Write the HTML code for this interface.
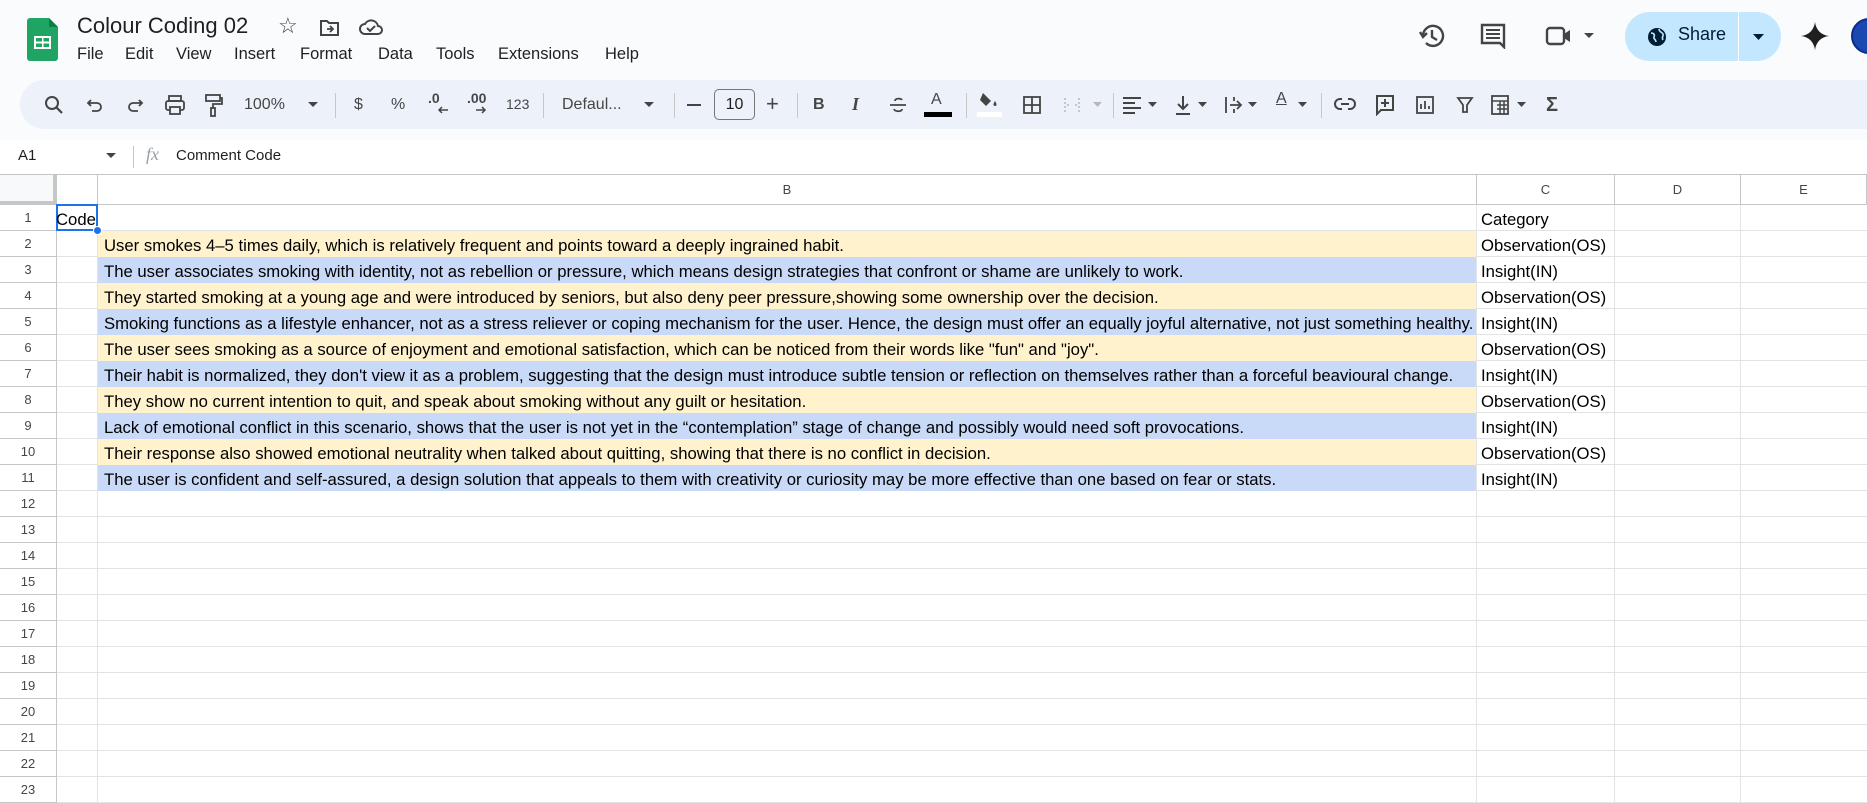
<!DOCTYPE html>
<html><head><meta charset="utf-8">
<style>
*{margin:0;padding:0;box-sizing:border-box}
body{width:1867px;height:802px;overflow:hidden;background:#fff;font-family:"Liberation Sans",Arial,sans-serif;position:relative;color:#1f1f1f}
.a{position:absolute;white-space:nowrap}
#top{position:absolute;left:0;top:0;width:1867px;height:140px;background:#f9fbfd}
#tb{position:absolute;left:20px;top:80px;width:1880px;height:49px;background:#edf2fa;border-radius:25px}
.menu{font-size:16.5px;top:45px;color:#1f1f1f}
.ti{top:96px;font-size:16px;color:#444746}
.sep{position:absolute;top:93px;width:1px;height:25px;background:#c7c7c7}
svg{position:absolute}
.ch{position:absolute;top:175px;height:30px;border-right:1px solid #c4c7c5;border-bottom:1px solid #c4c7c5;font-size:13px;color:#444746;text-align:center;line-height:30px}
.rh{position:absolute;left:0;width:57px;height:26px;border-right:1px solid #c4c7c5;border-bottom:1px solid #c4c7c5;font-size:13px;color:#444746;text-align:center;line-height:26px}
.row{position:absolute;left:57px;width:1810px;height:26px;border-bottom:1px solid #e2e3e3}
.cl{position:absolute;top:0;height:26px;border-right:1px solid #e2e3e3}
.t{position:absolute;top:2px;font-size:16.7px;line-height:26px;color:#000;white-space:nowrap}
.Y{background:#fff2cc}.B{background:#c9daf8}
</style></head><body>
<div id="top"></div>
<svg style="left:27px;top:18px" width="31" height="43" viewBox="0 0 31 43"><path d="M3 0h19l9 9v31a3 3 0 0 1-3 3H3a3 3 0 0 1-3-3V3a3 3 0 0 1 3-3z" fill="#1fa463"/><path d="M22 0l9 9h-9z" fill="#0b8043"/><rect x="7" y="18" width="17" height="13" fill="#fff"/><rect x="9" y="20" width="6" height="3.5" fill="#1fa463"/><rect x="16.5" y="20" width="5.5" height="3.5" fill="#1fa463"/><rect x="9" y="25.5" width="6" height="3.5" fill="#1fa463"/><rect x="16.5" y="25.5" width="5.5" height="3.5" fill="#1fa463"/></svg>
<div class="a" style="left:77px;top:13px;font-size:22px;color:#1f1f1f">Colour Coding 02</div>
<div class="a" style="left:278px;top:13px;font-size:22px;color:#444">☆</div>
<svg style="left:319px;top:18px" width="22" height="20" viewBox="0 0 22 20"><path d="M2 3h6l2 2h9v12H2z" fill="none" stroke="#444" stroke-width="2"/><path d="M8 11h6M11 8l3 3-3 3" fill="none" stroke="#444" stroke-width="1.8"/></svg>
<svg style="left:358px;top:17px" width="26" height="20" viewBox="0 0 26 20"><path d="M7 17h13a4 4 0 0 0 0-8 7 7 0 0 0-13-2 5 5 0 0 0 0 10z" fill="none" stroke="#444" stroke-width="2"/><path d="M9 11l3 3 5-5" fill="none" stroke="#444" stroke-width="2"/></svg>
<div class="a menu" style="left:77px">File</div>
<div class="a menu" style="left:125px">Edit</div>
<div class="a menu" style="left:176px">View</div>
<div class="a menu" style="left:234px">Insert</div>
<div class="a menu" style="left:300px">Format</div>
<div class="a menu" style="left:378px">Data</div>
<div class="a menu" style="left:436px">Tools</div>
<div class="a menu" style="left:498px">Extensions</div>
<div class="a menu" style="left:605px">Help</div>
<svg style="left:1418px;top:22px" width="28" height="28" viewBox="0 0 28 28"><path d="M5 14a10 10 0 1 1 3 7" fill="none" stroke="#444" stroke-width="2.4"/><path d="M2 10l3 5 4-4" fill="none" stroke="#444" stroke-width="2.4"/><path d="M14 8v7l5 3" fill="none" stroke="#444" stroke-width="2.4"/></svg>
<svg style="left:1480px;top:23px" width="26" height="26" viewBox="0 0 26 26"><path d="M2 2h22v22l-4-4H2z" fill="none" stroke="#444" stroke-width="2.4"/><path d="M6 7h14M6 11h14M6 15h14" stroke="#444" stroke-width="2"/></svg>
<svg style="left:1545px;top:25px" width="28" height="22" viewBox="0 0 28 22"><rect x="2" y="3" width="17" height="16" rx="3" fill="none" stroke="#444" stroke-width="2.4"/><path d="M19 9l6-4v12l-6-4" fill="#444"/></svg>
<svg style="left:1584px;top:33px" width="10" height="6"><path d="M0 0h10L5 5z" fill="#444"/></svg>
<div style="position:absolute;left:1625px;top:12px;width:156px;height:49px;border-radius:25px;background:#c2e7ff"></div>
<div style="position:absolute;left:1738px;top:12px;width:1px;height:49px;background:#fff"></div>
<svg style="left:1647px;top:27px" width="20" height="20" viewBox="0 0 20 20"><circle cx="10" cy="10" r="9" fill="#001d35"/><path d="M4 6c3 0 4 2 3 4s2 2 2 5M12 2c0 3 3 3 4 5s-2 3 0 6" stroke="#c2e7ff" stroke-width="1.6" fill="none"/></svg>
<div class="a" style="left:1678px;top:24px;font-size:18px;color:#001d35">Share</div>
<svg style="left:1753px;top:34px" width="11" height="6"><path d="M0 0h11L5.5 6z" fill="#001d35"/></svg>
<svg style="left:1801px;top:22px" width="28" height="28" viewBox="0 0 28 28"><path d="M14 0C15 8 20 13 28 14 20 15 15 20 14 28 13 20 8 15 0 14 8 13 13 8 14 0z" fill="#1f1f1f"/></svg>
<div style="position:absolute;left:1851px;top:18px;width:36px;height:36px;border-radius:50%;background:#1a48b0;border:2px solid #0a2d8a"></div>
<div id="tb"></div>
<svg style="left:44px;top:95px" width="20" height="20" viewBox="0 0 20 20"><circle cx="8" cy="8" r="6" fill="none" stroke="#444" stroke-width="2"/><path d="M12.5 12.5L18 18" stroke="#444" stroke-width="2.2"/></svg>
<svg style="left:86px;top:96px" width="18" height="18" viewBox="0 0 18 18"><path d="M5 4L2 7l3 3M2 7h9a4 4 0 0 1 0 8H6" fill="none" stroke="#444" stroke-width="1.8"/></svg>
<svg style="left:126px;top:96px" width="18" height="18" viewBox="0 0 18 18"><path d="M13 4l3 3-3 3M16 7H7a4 4 0 0 0 0 8h5" fill="none" stroke="#444" stroke-width="1.8"/></svg>
<svg style="left:164px;top:94px" width="22" height="22" viewBox="0 0 22 22"><rect x="5" y="2" width="12" height="5" fill="none" stroke="#444" stroke-width="1.8"/><rect x="2" y="7" width="18" height="9" rx="2" fill="none" stroke="#444" stroke-width="1.8"/><rect x="6" y="13" width="10" height="7" fill="#edf2fa" stroke="#444" stroke-width="1.8"/></svg>
<svg style="left:204px;top:93px" width="20" height="24" viewBox="0 0 20 24"><rect x="2" y="2" width="14" height="6" fill="none" stroke="#444" stroke-width="1.8"/><path d="M16 5h2v6H9v4" fill="none" stroke="#444" stroke-width="1.8"/><rect x="7" y="15" width="4" height="8" fill="none" stroke="#444" stroke-width="1.8"/></svg>
<div class="a ti" style="left:244px">100%</div>
<svg style="left:308px;top:102px" width="10" height="6"><path d="M0 0h10L5 5z" fill="#444"/></svg>
<div class="sep" style="left:335px"></div>
<div class="a ti" style="left:354px">$</div>
<div class="a ti" style="left:391px">%</div>
<div class="a ti" style="left:428px;font-weight:bold;font-size:14px;top:90px">.0</div>
<svg style="left:437px;top:106px" width="12" height="8"><path d="M11 4H2M5 1L2 4l3 3" fill="none" stroke="#444" stroke-width="1.5"/></svg>
<div class="a ti" style="left:467px;font-weight:bold;font-size:14px;top:90px">.00</div>
<svg style="left:475px;top:106px" width="12" height="8"><path d="M1 4h9M7 1l3 3-3 3" fill="none" stroke="#444" stroke-width="1.5"/></svg>
<div class="a ti" style="left:506px;font-size:14px;top:96px">123</div>
<div class="sep" style="left:543px"></div>
<div class="a ti" style="left:562px">Defaul...</div>
<svg style="left:644px;top:102px" width="10" height="6"><path d="M0 0h10L5 5z" fill="#444"/></svg>
<div class="sep" style="left:674px"></div>
<div style="position:absolute;left:687px;top:104px;width:14px;height:2px;background:#444"></div>
<div style="position:absolute;left:714px;top:89px;width:41px;height:31px;border:1px solid #747775;border-radius:5px;font-size:16px;text-align:center;line-height:29px;color:#1f1f1f">10</div>
<div class="a ti" style="left:766px;top:91px;font-size:22px">+</div>
<div class="sep" style="left:797px"></div>
<div class="a ti" style="left:813px;font-weight:bold">B</div>
<div class="a ti" style="left:852px;font-style:italic;font-weight:bold;font-family:'Liberation Serif',serif;font-size:18px;top:94px">I</div>
<svg style="left:888px;top:95px" width="20" height="20" viewBox="0 0 20 20"><path d="M14 5c-1-2-7-2-7 1M2 10h16M6 14c1 3 8 3 8 0" fill="none" stroke="#444" stroke-width="1.8"/></svg>
<div class="a ti" style="left:931px;top:91px">A</div>
<div style="position:absolute;left:924px;top:112px;width:28px;height:5px;background:#000"></div>
<div class="sep" style="left:966px"></div>
<svg style="left:977px;top:91px" width="24" height="20" viewBox="0 0 24 20"><path d="M6 2l8 8-5 5-6-6z" fill="#444"/><path d="M18 10c-2 3-2 5 0 5s2-2 0-5z" fill="#444"/></svg>
<div style="position:absolute;left:977px;top:112px;width:25px;height:5px;background:#fff"></div>
<svg style="left:1022px;top:95px" width="20" height="20" viewBox="0 0 20 20"><rect x="2" y="2" width="16" height="16" fill="none" stroke="#444" stroke-width="1.8"/><path d="M10 2v16M2 10h16" stroke="#444" stroke-width="1.8"/></svg>
<svg style="left:1063px;top:96px" width="18" height="18" viewBox="0 0 18 18"><path d="M2 2v14M16 2v14M4 9h4M14 9h-4" fill="none" stroke="#b8b8b8" stroke-width="1.5" stroke-dasharray="2 2"/></svg>
<svg style="left:1093px;top:102px" width="9" height="5"><path d="M0 0h9L4.5 5z" fill="#b8b8b8"/></svg>
<div class="sep" style="left:1113px"></div>
<svg style="left:1122px;top:96px" width="20" height="18" viewBox="0 0 20 18"><path d="M1 2h18M1 7h12M1 12h18M1 17h12" stroke="#444" stroke-width="2"/></svg>
<svg style="left:1148px;top:102px" width="9" height="5"><path d="M0 0h9L4.5 5z" fill="#444"/></svg>
<svg style="left:1174px;top:94px" width="18" height="22" viewBox="0 0 18 22"><path d="M9 2v13M4 10l5 5 5-5M2 20h14" fill="none" stroke="#444" stroke-width="2"/></svg>
<svg style="left:1198px;top:102px" width="9" height="5"><path d="M0 0h9L4.5 5z" fill="#444"/></svg>
<svg style="left:1224px;top:95px" width="20" height="20" viewBox="0 0 20 20"><path d="M2 2v16M6 10h10M13 6l4 4-4 4M10 2v4M10 14v4" fill="none" stroke="#444" stroke-width="1.8"/></svg>
<svg style="left:1248px;top:102px" width="9" height="5"><path d="M0 0h9L4.5 5z" fill="#444"/></svg>
<div class="a ti" style="left:1276px;top:90px;text-decoration:underline">A</div>
<svg style="left:1298px;top:102px" width="9" height="5"><path d="M0 0h9L4.5 5z" fill="#444"/></svg>
<div class="sep" style="left:1321px"></div>
<svg style="left:1334px;top:97px" width="22" height="14" viewBox="0 0 22 14"><path d="M8 2H6a5 5 0 0 0 0 10h2M14 2h2a5 5 0 0 1 0 10h-2M7 7h8" fill="none" stroke="#444" stroke-width="2"/></svg>
<svg style="left:1375px;top:94px" width="20" height="22" viewBox="0 0 20 22"><path d="M2 2h16v14H6l-4 4z" fill="none" stroke="#444" stroke-width="2"/><path d="M10 5v8M6 9h8" stroke="#444" stroke-width="2"/></svg>
<svg style="left:1415px;top:95px" width="20" height="20" viewBox="0 0 20 20"><rect x="2" y="2" width="16" height="16" fill="none" stroke="#444" stroke-width="1.8"/><path d="M6 14V9M10 14V6M14 14v-3" stroke="#444" stroke-width="1.8"/></svg>
<svg style="left:1456px;top:96px" width="18" height="18" viewBox="0 0 18 18"><path d="M2 2h14l-5 7v7H7V9z" fill="none" stroke="#444" stroke-width="1.8"/></svg>
<svg style="left:1490px;top:94px" width="22" height="22" viewBox="0 0 22 22"><rect x="2" y="2" width="16" height="18" fill="none" stroke="#444" stroke-width="1.8"/><path d="M2 7h16M7 11h10M7 15h10M10 7v13M14 7v13" stroke="#444" stroke-width="1.5"/></svg>
<svg style="left:1517px;top:102px" width="9" height="5"><path d="M0 0h9L4.5 5z" fill="#444"/></svg>
<div class="a ti" style="left:1546px;top:94px;font-size:20px;font-weight:bold">Σ</div>
<div class="a" style="left:18px;top:147px;font-size:15px;color:#1f1f1f">A1</div>
<svg style="left:106px;top:153px" width="10" height="6"><path d="M0 0h10L5 5z" fill="#444"/></svg>
<div style="position:absolute;left:133px;top:146px;width:1px;height:22px;background:#c7c7c7"></div>
<div class="a" style="left:146px;top:144px;font-size:18px;font-style:italic;color:#9aa0a6;font-family:'Liberation Serif',serif">fx</div>
<div class="a" style="left:176px;top:147px;font-size:15px;color:#1f1f1f">Comment Code</div>
<div style="position:absolute;left:0;top:174px;width:1867px;height:1px;background:#c4c7c5"></div>
<div style="position:absolute;left:0;top:175px;width:57px;height:30px;background:#f8f9fa;border-right:4px solid #c4c7c5;border-bottom:4px solid #c4c7c5"></div>
<div class="ch" style="left:57px;width:41px"></div>
<div class="ch" style="left:98px;width:1379px">B</div>
<div class="ch" style="left:1477px;width:138px">C</div>
<div class="ch" style="left:1615px;width:126px">D</div>
<div class="ch" style="left:1741px;width:126px">E</div>
<div id="grid"></div>
<script>
(function(){
var g=document.getElementById('grid');
var data=[
["","Category",""],
["User smokes 4–5 times daily, which is relatively frequent and points toward a deeply ingrained habit.","Observation(OS)","Y"],
["The user associates smoking with identity, not as rebellion or pressure, which means design strategies that confront or shame are unlikely to work.","Insight(IN)","B"],
["They started smoking at a young age and were introduced by seniors, but also deny peer pressure,showing some ownership over the decision.","Observation(OS)","Y"],
["Smoking functions as a lifestyle enhancer, not as a stress reliever or coping mechanism for the user. Hence, the design must offer an equally joyful alternative, not just something healthy.","Insight(IN)","B"],
["The user sees smoking as a source of enjoyment and emotional satisfaction, which can be noticed from their words like \"fun\" and \"joy\".","Observation(OS)","Y"],
["Their habit is normalized, they don't view it as a problem, suggesting that the design must introduce subtle tension or reflection on themselves rather than a forceful beavioural change.","Insight(IN)","B"],
["They show no current intention to quit, and speak about smoking without any guilt or hesitation.","Observation(OS)","Y"],
["Lack of emotional conflict in this scenario, shows that the user is not yet in the “contemplation” stage of change and possibly would need soft provocations.","Insight(IN)","B"],
["Their response also showed emotional neutrality when talked about quitting, showing that there is no conflict in decision.","Observation(OS)","Y"],
["The user is confident and self-assured, a design solution that appeals to them with creativity or curiosity may be more effective than one based on fear or stats.","Insight(IN)","B"]];
var h='';
for(var r=1;r<=23;r++){
 var yy=205+(r-1)*26;
 h+='<div class="rh" style="top:'+yy+'px">'+r+'</div>';
 h+='<div class="row" style="top:'+yy+'px">';
 var d=data[r-1];
 var cls=d?d[2]:'';
 h+='<div class="cl" style="left:0;width:41px"></div>';
 h+='<div class="cl '+cls+'" style="left:41px;width:1379px"></div>';
 h+='<div class="cl" style="left:1420px;width:138px"></div>';
 h+='<div class="cl" style="left:1558px;width:126px"></div>';
 if(d){
  h+='<div class="t" style="left:47px">'+d[0].replace(/"/g,'&quot;')+'</div>';
  h+='<div class="t" style="left:1424px">'+d[1]+'</div>';
 }
 h+='</div>';
}
g.innerHTML=h;
})();
</script>
<div style="position:absolute;left:56px;top:204px;width:42px;height:27px;border:2px solid #1a73e8"></div>
<div class="a" style="left:56px;top:207px;font-size:16.7px;line-height:26px;color:#000;width:40px;overflow:hidden;text-align:right;padding-right:2px">Code</div>
<div style="position:absolute;left:93px;top:226px;width:9px;height:9px;border-radius:50%;background:#1a73e8;border:1px solid #fff"></div>
</body></html>
